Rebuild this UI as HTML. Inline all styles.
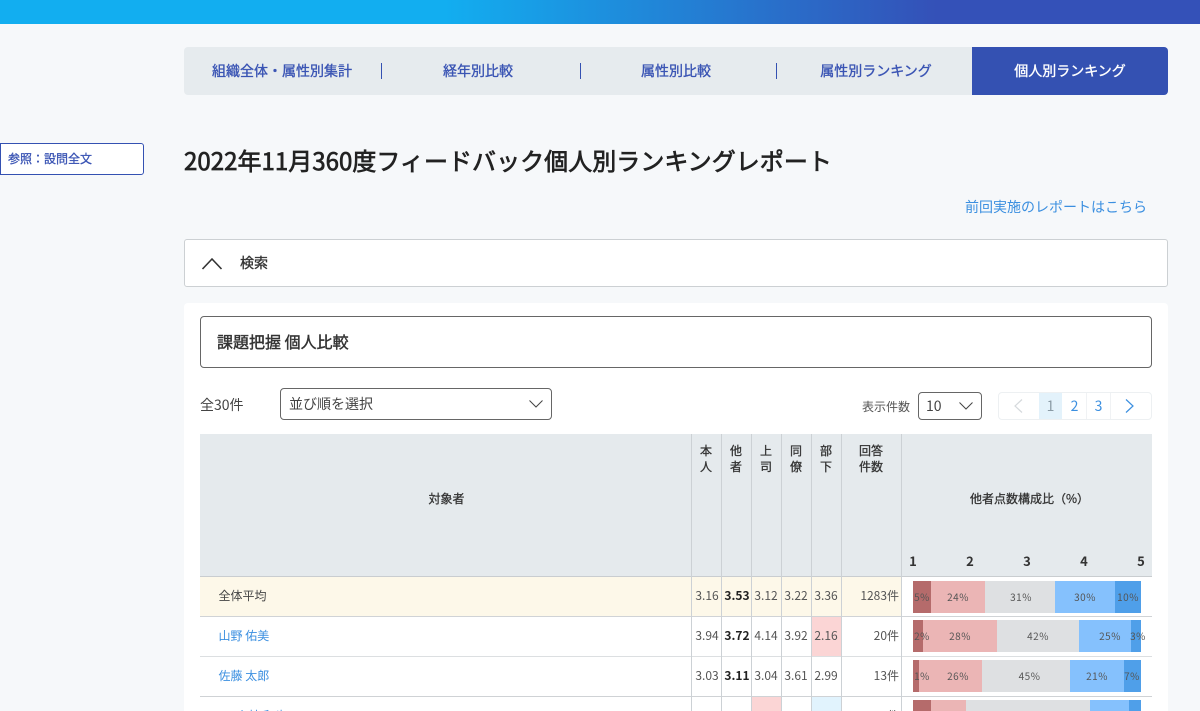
<!DOCTYPE html>
<html lang="ja"><head><meta charset="utf-8">
<style>
html,body{margin:0;padding:0;width:1200px;height:711px;overflow:hidden;background:#f6f8fa;text-spacing-trim:space-all;}
body{position:relative;font-family:"Liberation Sans","Noto Sans CJK JP",sans-serif;color:#333;}
div,a,svg{position:absolute;box-sizing:border-box;}
.jp{font-family:"Noto Sans CJK JP","Liberation Sans",sans-serif;}
.t{white-space:nowrap;line-height:20px;height:20px;}
.c{text-align:center;}
.tab{top:47px;height:48px;line-height:48px;text-align:center;font-size:14px;-webkit-text-stroke:.35px currentColor;color:#3a54b4;font-family:"Noto Sans CJK JP",sans-serif;white-space:nowrap;}
.sep{top:63px;width:1px;height:16px;background:#3451b2;}
.v{width:1px;background:#ccd1d5;}
.h{left:200px;width:952px;height:1px;}
.num{font-size:12px;text-align:center;width:30px;line-height:20px;height:20px;color:#555;font-family:"Noto Sans CJK JP",sans-serif;white-space:nowrap;}
.b{font-weight:700;color:#222;}
.bar{height:32px;line-height:32px;font-size:10px;text-align:center;color:#555;white-space:nowrap;letter-spacing:.5px;font-family:"Noto Sans CJK JP",sans-serif;}
.a{background:#b56b6b}.p{background:#ebb5b5}.g{background:#dee0e2}.l{background:#85c1fd}.d{background:#4f9fe9}
.hd{font-size:12px;-webkit-text-stroke:.3px currentColor;color:#333;text-align:center;line-height:16px;font-family:"Noto Sans CJK JP",sans-serif;white-space:nowrap;}
.sc{font-size:13px;font-weight:700;color:#333;top:551px;line-height:20px;width:14px;text-align:center;font-family:"Noto Sans CJK JP",sans-serif;}
.nm{font-size:12px;left:219px;line-height:20px;font-family:"Noto Sans CJK JP",sans-serif;white-space:nowrap;}
</style></head><body>
<div style="left:0;top:0;width:1200px;height:24px;background:linear-gradient(90deg,#12aef0 0%,#12aef0 37%,#3451b8 78%,#3451b8 100%);"></div>

<div style="left:184px;top:47px;width:984px;height:48px;background:#e6ebee;border-radius:4px;"></div>
<div style="left:972px;top:47px;width:196px;height:48px;background:#3451b2;border-radius:0 4px 4px 0;"></div>
<div class="tab" style="left:184px;width:196px;">組織全体・属性別集計</div>
<div class="sep" style="left:381px;"></div>
<div class="tab" style="left:381px;width:194px;">経年別比較</div>
<div class="sep" style="left:580px;"></div>
<div class="tab" style="left:580px;width:192px;">属性別比較</div>
<div class="sep" style="left:776px;"></div>
<div class="tab" style="left:778px;width:196px;">属性別ランキング</div>
<div class="tab" style="left:972px;width:196px;color:#fff;">個人別ランキング</div>

<div style="left:0;top:143px;width:144px;height:32px;background:#fff;border:1px solid #3451b2;border-radius:0 3px 3px 0;"></div>
<div class="t jp" style="left:8px;top:149px;font-size:12px;-webkit-text-stroke:.3px currentColor;color:#3a54b4;">参照：設問全文</div>

<div class="jp" style="left:184px;top:142px;font-size:24px;line-height:36px;letter-spacing:.04px;-webkit-text-stroke:.7px currentColor;color:#222;white-space:nowrap;">2022年11月360度フィードバック個人別ランキングレポート</div>
<div class="t jp" style="left:965px;top:197px;font-size:14px;color:#3b8fe0;">前回実施のレポートはこちら</div>

<div style="left:184px;top:239px;width:984px;height:48px;background:#fff;border:1px solid #ccd0d3;border-radius:3px;"></div>
<svg style="left:200px;top:253px" width="24" height="20" viewBox="0 0 24 20"><path d="M2.5 16 L12 6 L21.5 16" fill="none" stroke="#333" stroke-width="1.6"/></svg>
<div class="t jp" style="left:240px;top:253px;font-size:14px;-webkit-text-stroke:.35px currentColor;color:#333;">検索</div>

<div style="left:184px;top:303px;width:984px;height:420px;background:#fff;border-radius:4px;"></div>
<div style="left:200px;top:316px;width:952px;height:52px;border:1px solid #666;border-radius:4px;background:#fff;"></div>
<div class="jp" style="left:217px;top:329px;font-size:16px;line-height:24px;-webkit-text-stroke:.4px currentColor;color:#333;white-space:nowrap;">課題把握 個人比較</div>

<div class="t jp" style="left:200px;top:395px;font-size:14px;color:#444;">全30件</div>
<div style="left:280px;top:388px;width:272px;height:32px;border:1px solid #666;border-radius:4px;background:#fff;"></div>
<div class="t jp" style="left:289px;top:394px;font-size:14px;color:#444;">並び順を選択</div>
<svg style="left:528px;top:398px" width="16" height="12" viewBox="0 0 16 12"><path d="M1.5 2.5 L8 9 L14.5 2.5" fill="none" stroke="#444" stroke-width="1"/></svg>

<div class="t jp" style="left:862px;top:397px;font-size:12px;color:#555;">表示件数</div>
<div style="left:918px;top:392px;width:64px;height:28px;border:1px solid #666;border-radius:4px;background:#fff;"></div>
<div class="t jp" style="left:926px;top:396px;font-size:14px;color:#444;">10</div>
<svg style="left:958px;top:400px" width="16" height="12" viewBox="0 0 16 12"><path d="M1.5 2.5 L8 9 L14.5 2.5" fill="none" stroke="#444" stroke-width="1"/></svg>

<div style="left:998px;top:392px;width:154px;height:28px;border:1px solid #edf0f2;border-radius:4px;background:#fff;"></div>
<div style="left:1039px;top:393px;width:23px;height:26px;background:#e3f2fb;"></div>
<div class="v" style="left:1086px;top:393px;height:26px;background:#f0f2f4"></div>
<div class="v" style="left:1110px;top:393px;height:26px;background:#f0f2f4"></div>
<svg style="left:1012px;top:398px" width="12" height="16" viewBox="0 0 12 16"><path d="M10 1.5 L3 8 L10 14.5" fill="none" stroke="#d5d9dc" stroke-width="1.2"/></svg>
<div class="t c jp" style="left:1039px;top:396px;width:23px;font-size:14px;color:#8a9aa5;">1</div>
<div class="t c jp" style="left:1063px;top:396px;width:23px;font-size:14px;color:#3b8fe0;">2</div>
<div class="t c jp" style="left:1087px;top:396px;width:23px;font-size:14px;color:#3b8fe0;">3</div>
<svg style="left:1124px;top:398px" width="12" height="16" viewBox="0 0 12 16"><path d="M2 1.5 L9 8 L2 14.5" fill="none" stroke="#3b8fe0" stroke-width="1.2"/></svg>

<!-- table header -->
<div style="left:200px;top:434px;width:952px;height:142px;background:#e5eaed;"></div>
<div style="left:200px;top:577px;width:952px;height:39px;background:#fdf8e9;"></div>
<div style="left:902px;top:577px;width:250px;height:39px;background:#fff;"></div>
<div style="left:812px;top:617px;width:29px;height:39px;background:#fbd5d5;"></div>
<div style="left:752px;top:697px;width:29px;height:14px;background:#fbd5d5;"></div>
<div style="left:812px;top:697px;width:29px;height:14px;background:#e1f3fd;"></div>

<div class="h" style="top:576px;background:#c9cdd0;"></div>
<div class="h" style="top:616px;background:#d0d3d6;"></div>
<div class="h" style="top:656px;background:#dcdfe1;"></div>
<div class="h" style="top:696px;background:#cfd2d5;"></div>

<div class="v" style="left:691px;top:434px;height:277px;"></div>
<div class="v" style="left:721px;top:434px;height:277px;"></div>
<div class="v" style="left:751px;top:434px;height:277px;"></div>
<div class="v" style="left:781px;top:434px;height:277px;"></div>
<div class="v" style="left:811px;top:434px;height:277px;"></div>
<div class="v" style="left:841px;top:434px;height:277px;"></div>
<div class="v" style="left:901px;top:434px;height:277px;"></div>

<div class="hd" style="left:201px;top:491px;width:491px;">対象者</div>
<div class="hd" style="left:691px;top:443px;width:30px;">本<br>人</div>
<div class="hd" style="left:721px;top:443px;width:30px;">他<br>者</div>
<div class="hd" style="left:751px;top:443px;width:30px;">上<br>司</div>
<div class="hd" style="left:781px;top:443px;width:30px;">同<br>僚</div>
<div class="hd" style="left:811px;top:443px;width:30px;">部<br>下</div>
<div class="hd" style="left:841px;top:443px;width:60px;">回答<br>件数</div>
<div class="hd" style="left:970px;top:491px;text-align:left;">他者点数構成比（%）</div>
<div class="sc" style="left:906px;">1</div>
<div class="sc" style="left:963px;">2</div>
<div class="sc" style="left:1020px;">3</div>
<div class="sc" style="left:1077px;">4</div>
<div class="sc" style="left:1134px;">5</div>

<!-- row 1 -->
<div class="nm" style="top:586px;color:#444;left:218.5px;">全体平均</div>
<div class="num" style="left:692px;top:586px;">3.16</div>
<div class="num b" style="left:722px;top:586px;">3.53</div>
<div class="num" style="left:751px;top:586px;">3.12</div>
<div class="num" style="left:781px;top:586px;">3.22</div>
<div class="num" style="left:811px;top:586px;">3.36</div>
<div class="num" style="left:842px;top:586px;width:57px;text-align:right;">1283件</div>
<div class="bar a" style="left:913px;top:581px;width:18px;">5%</div>
<div class="bar p" style="left:931px;top:581px;width:54px;">24%</div>
<div class="bar g" style="left:985px;top:581px;width:70px;padding-left:2px;">31%</div>
<div class="bar l" style="left:1055px;top:581px;width:60px;">30%</div>
<div class="bar d" style="left:1115px;top:581px;width:26px;">10%</div>

<!-- row 2 -->
<div class="nm" style="top:626px;color:#3b8fe0;left:218.5px;">山野 佑美</div>
<div class="num" style="left:692px;top:626px;">3.94</div>
<div class="num b" style="left:722px;top:626px;">3.72</div>
<div class="num" style="left:751px;top:626px;">4.14</div>
<div class="num" style="left:781px;top:626px;">3.92</div>
<div class="num" style="left:811px;top:626px;">2.16</div>
<div class="num" style="left:842px;top:626px;width:57px;text-align:right;">20件</div>
<div class="bar a" style="left:913px;top:620px;width:10px;"></div>
<div class="bar p" style="left:923px;top:620px;width:74px;">28%</div>
<div class="bar g" style="left:997px;top:620px;width:82px;">42%</div>
<div class="bar l" style="left:1079px;top:620px;width:52px;padding-left:10px;">25%</div>
<div class="bar d" style="left:1131px;top:620px;width:10px;"></div>
<div class="bar" style="left:908px;top:620px;width:28px;">2%</div>
<div class="bar" style="left:1124px;top:620px;width:28px;">3%</div>

<!-- row 3 -->
<div class="nm" style="top:666px;color:#3b8fe0;left:218.5px;">佐藤 太郎</div>
<div class="num" style="left:692px;top:666px;">3.03</div>
<div class="num b" style="left:722px;top:666px;">3.11</div>
<div class="num" style="left:751px;top:666px;">3.04</div>
<div class="num" style="left:781px;top:666px;">3.61</div>
<div class="num" style="left:811px;top:666px;">2.99</div>
<div class="num" style="left:842px;top:666px;width:57px;text-align:right;">13件</div>
<div class="bar a" style="left:913px;top:660px;width:6px;"></div>
<div class="bar p" style="left:919px;top:660px;width:63px;padding-left:15px;">26%</div>
<div class="bar g" style="left:982px;top:660px;width:88px;padding-left:7px;">45%</div>
<div class="bar l" style="left:1070px;top:660px;width:54px;">21%</div>
<div class="bar d" style="left:1124px;top:660px;width:17px;"></div>
<div class="bar" style="left:908px;top:660px;width:28px;">1%</div>
<div class="bar" style="left:1118px;top:660px;width:28px;">7%</div>

<!-- row 4 -->
<div class="nm" style="top:706px;color:#3b8fe0;left:236px;">小林 和也</div>
<div class="num" style="left:842px;top:706px;width:57px;text-align:right;">9件</div>
<div class="bar a" style="left:913px;top:700px;width:18px;height:11px;"></div>
<div class="bar p" style="left:931px;top:700px;width:35px;height:11px;"></div>
<div class="bar g" style="left:966px;top:700px;width:124px;height:11px;"></div>
<div class="bar l" style="left:1090px;top:700px;width:39px;height:11px;"></div>
<div class="bar d" style="left:1129px;top:700px;width:12px;height:11px;"></div>
</body></html>
